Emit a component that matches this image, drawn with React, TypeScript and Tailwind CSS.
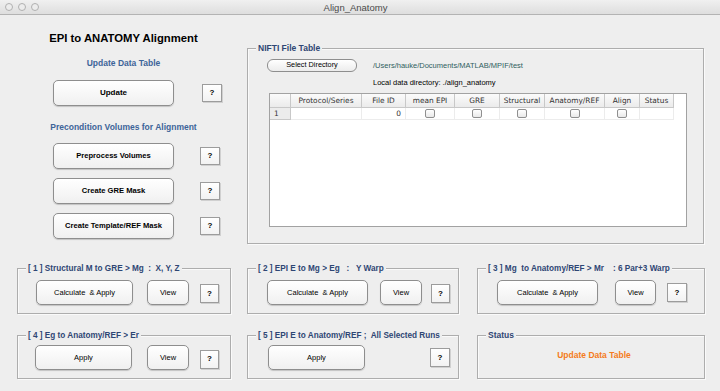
import React from "react";

const btn =
  "flex items-center justify-center rounded-[5px] border border-[#8e8e8e] bg-linear-to-b from-white to-[#f0f0f0] shadow-[0_1px_1px_rgba(0,0,0,0.18)] text-black whitespace-pre";

const HelpBtn = ({ className = "" }: { className?: string }) => (
  <div
    className={`flex items-center justify-center border border-[#9c9c9c] bg-linear-to-b from-white to-[#f2f2f2] shadow-[1px_1px_0_#d0d0d0] text-[8px] font-bold text-black ${className}`}
  >
    ?
  </div>
);

const Group = ({
  title,
  className = "",
  titleSize = "text-[8.5px]",
  children,
}: {
  title: string;
  className?: string;
  titleSize?: string;
  children?: React.ReactNode;
}) => (
  <div
    className={`relative border border-[#adadad] shadow-[inset_1px_1px_0_#fafafa,1px_1px_0_#fafafa] ${className}`}
  >
    <span
      className={`absolute -top-[6px] left-[8px] bg-[#eeeeee] px-[2px] ${titleSize} font-bold leading-[11px] text-[#2e4674] whitespace-pre`}
    >
      {title}
    </span>
    {children}
  </div>
);

const Check = () => (
  <div className="h-[9px] w-[10px] rounded-[2px] border border-[#8f8f8f] bg-linear-to-b from-white to-[#e9e9e9]" />
);

const columns = [
  { name: "", w: "w-[21px]" },
  { name: "Protocol/Series", w: "w-[71px]" },
  { name: "File ID", w: "w-[44px]" },
  { name: "mean EPI", w: "w-[49px]" },
  { name: "GRE", w: "w-[45px]" },
  { name: "Structural", w: "w-[45px]" },
  { name: "Anatomy/REF", w: "w-[60px]" },
  { name: "Align", w: "w-[35px]" },
  { name: "Status", w: "w-[34px]" },
];

const small = "text-[8.2px]";

export default function App() {
  return (
    <div className="flex h-[391px] w-[720px] flex-col overflow-hidden bg-[#eeeeee] font-['Liberation_Sans',Arial,sans-serif] text-black">
      {/* window title bar */}
      <div className="relative flex h-[15px] items-center border-b border-[#b3b3b3] bg-linear-to-b from-[#f0f0f0] to-[#dedede]">
        <div className="ml-[5px] flex gap-[5px]">
          <div className="h-[8px] w-[8px] rounded-full border border-[#b0b0b0] bg-[#ececec]" />
          <div className="h-[8px] w-[8px] rounded-full border border-[#b0b0b0] bg-[#ececec]" />
          <div className="h-[8px] w-[8px] rounded-full border border-[#b0b0b0] bg-[#ececec]" />
        </div>
        <div className="flex-1 pr-[48px] text-center text-[9.5px] leading-[15px] text-[#4a4a4a]">Align_Anatomy</div>
      </div>

      {/* top section */}
      <div className="flex">
        <div className="flex w-[247px] flex-col">
          <div className="mt-[16px] text-center text-[11.3px] font-bold leading-[15px]">EPI to ANATOMY Alignment</div>
          <div className="mt-[12px] text-center text-[8.5px] font-bold leading-[11px] text-[#3d6499]">Update Data Table</div>
          <div className="mt-[11px] flex items-center pl-[53px]">
            <div className={`${btn} h-[26px] w-[121px] text-[8px] font-bold`}>Update</div>
            <HelpBtn className="ml-[28px] h-[18px] w-[20px]" />
          </div>
          <div className="mt-[16px] text-center text-[8.5px] font-bold leading-[11px] text-[#3d6499]">
            Precondition Volumes for Alignment
          </div>
          {["Preprocess Volumes", "Create GRE Mask", "Create Template/REF Mask"].map((label, i) => (
            <div key={label} className={`${i === 0 ? "mt-[10px]" : "mt-[9px]"} flex items-center pl-[53px]`}>
              <div className={`${btn} h-[26px] w-[121px] text-[7.6px] font-bold`}>{label}</div>
              <HelpBtn className="ml-[26px] h-[18px] w-[20px]" />
            </div>
          ))}
        </div>

        <Group title="NIFTI File Table" className="mt-[33px] h-[196px] w-[457px]">
          <div className="mt-[10px] flex items-center pl-[19px]">
            <div className="flex h-[13px] w-[90px] items-center justify-center rounded-[6px] border border-[#8e8e8e] bg-linear-to-b from-white to-[#ececec] text-[7.3px] text-black">
              Select Directory
            </div>
            <div className="ml-[16px] text-[7.5px] leading-[10px] text-[#2f5e5e]">/Users/hauke/Documents/MATLAB/MPIF/test</div>
          </div>
          <div className="mt-[6px] pl-[125px] text-[7.5px] leading-[10px]">Local data directory: ./align_anatomy</div>
          <div className="ml-[21px] mt-[5px] h-[134px] w-[418px] border border-[#a2a2a2] bg-white font-['DejaVu_Sans',sans-serif] text-[#333]">
            <div className="flex h-[14px]">
              {columns.map((c) => (
                <div
                  key={c.name}
                  className={`${c.w} flex items-center justify-center border-b border-r border-[#c8c8c8] bg-linear-to-b from-[#fbfbfb] to-[#ebebeb] text-[7.4px] leading-none`}
                >
                  {c.name}
                </div>
              ))}
            </div>
            <div className="flex h-[12px]">
              <div className="flex w-[21px] items-center border-b border-r border-[#c8c8c8] bg-[#ececec] pl-[4px] text-[7.4px] leading-none">1</div>
              <div className="w-[71px] border-b border-r border-[#ececec]" />
              <div className="flex w-[44px] items-center justify-end border-b border-r border-[#ececec] pr-[4px] text-[7.4px] leading-none">0</div>
              {["w-[49px]", "w-[45px]", "w-[45px]", "w-[60px]", "w-[35px]"].map((w, i) => (
                <div key={i} className={`${w} flex items-center justify-center border-b border-r border-[#ececec]`}>
                  <Check />
                </div>
              ))}
              <div className="w-[34px] border-b border-r border-[#ececec]" />
            </div>
          </div>
        </Group>
      </div>

      {/* bottom panels */}
      <div className="mt-[24px] flex pl-[17px]">
        <Group title="[ 1 ] Structural M to GRE > Mg  :  X, Y, Z" titleSize={small} className="h-[46px] w-[214px]">
          <div className="mt-[11px] flex items-center pl-[18px]">
            <div className={`${btn} h-[25px] w-[97px] text-[7.5px]`}>Calculate  &amp; Apply</div>
            <div className={`${btn} ml-[14px] h-[25px] w-[42px] text-[7.5px]`}>View</div>
            <HelpBtn className="ml-[11px] mt-[2px] h-[19px] w-[19px]" />
          </div>
        </Group>
        <Group title="[ 2 ] EPI E to Mg > Eg   :   Y Warp" titleSize={small} className="ml-[16px] h-[46px] w-[212px]">
          <div className="mt-[11px] flex items-center pl-[19px]">
            <div className={`${btn} h-[25px] w-[101px] text-[7.5px]`}>Calculate  &amp; Apply</div>
            <div className={`${btn} ml-[12px] h-[25px] w-[42px] text-[7.5px]`}>View</div>
            <HelpBtn className="ml-[9px] mt-[2px] h-[19px] w-[19px]" />
          </div>
        </Group>
        <Group title="[ 3 ] Mg  to Anatomy/REF > Mr    : 6 Par+3 Warp" titleSize={small} className="ml-[18px] h-[46px] w-[228px]">
          <div className="mt-[11px] flex items-center pl-[19px]">
            <div className={`${btn} h-[25px] w-[101px] text-[7.5px]`}>Calculate  &amp; Apply</div>
            <div className={`${btn} ml-[17px] h-[25px] w-[41px] text-[7.5px]`}>View</div>
            <HelpBtn className="ml-[11px] h-[19px] w-[20px]" />
          </div>
        </Group>
      </div>

      <div className="mt-[21px] flex pl-[17px]">
        <Group title="[ 4 ] Eg to Anatomy/REF > Er" titleSize={small} className="h-[44px] w-[214px]">
          <div className="mt-[9px] flex items-center pl-[17px]">
            <div className={`${btn} h-[25px] w-[97px] text-[7.5px]`}>Apply</div>
            <div className={`${btn} ml-[15px] h-[25px] w-[42px] text-[7.5px]`}>View</div>
            <HelpBtn className="ml-[11px] mt-[3px] h-[19px] w-[19px]" />
          </div>
        </Group>
        <Group title="[ 5 ] EPI E to Anatomy/REF ;  All Selected Runs" titleSize={small} className="ml-[16px] h-[44px] w-[212px]">
          <div className="mt-[9px] flex items-center pl-[20px]">
            <div className={`${btn} h-[25px] w-[97px] text-[7.5px]`}>Apply</div>
            <HelpBtn className="ml-[65px] h-[19px] w-[20px]" />
          </div>
        </Group>
        <Group title="Status" className="ml-[18px] h-[44px] w-[228px]">
          <div className="mt-[14px] pl-[6px] text-center text-[8.5px] font-bold leading-[11px] text-[#f47b20]">
            Update Data Table
          </div>
        </Group>
      </div>
    </div>
  );
}
